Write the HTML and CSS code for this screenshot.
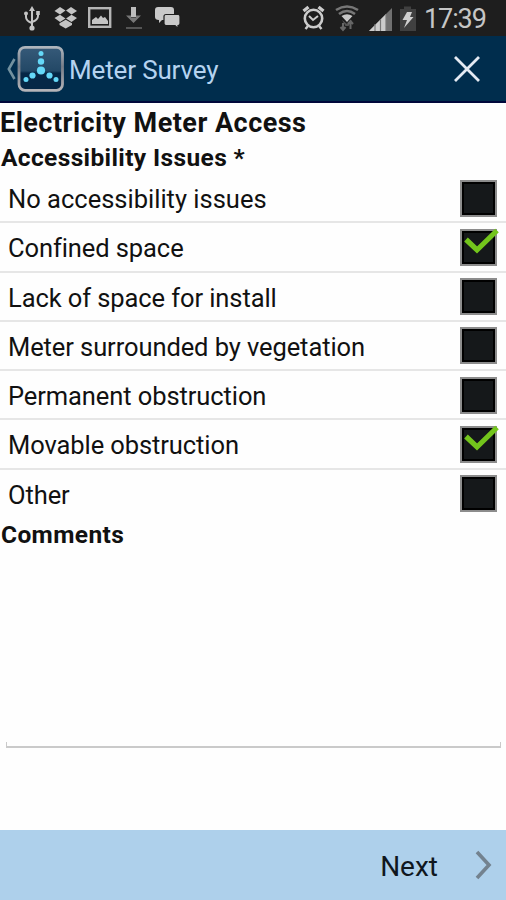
FILE: index.html
```html
<!DOCTYPE html>
<html lang="en">
<head>
<meta charset="utf-8">
<title>Meter Survey</title>
<link rel="stylesheet" href="styles.css">
</head>
<body>
<div class="status">
  <svg class="left-icons" width="190" height="36" viewBox="0 0 190 36">
    <g stroke="#c4c4c4" stroke-width="2" fill="none"><path d="M32 9V27M26 14V17Q26 21 32 23M38 13V16Q38 20 32 22"/></g>
    <g fill="#c4c4c4"><path d="M32 6L35 11H29Z"/><circle cx="32" cy="28" r="2.600"/><circle cx="26" cy="13.500" r="2"/><path d="M36.200 11h3.600v4h-3.600z"/>
    <path d="M60 7L65.500 10.500L60 14.500L54.500 11ZM71 7L77 11L71.500 14.500L66 10.500ZM54.500 18L60 14.800L65.500 18.500L60 22ZM77 18L71.500 14.800L66 18.500L71.500 22ZM59.500 23.300L65.700 19.700L72 23.300V25L65.700 28.600L59.500 25Z"/>
    <path d="M92 24V20L96 17L98 19L101 15.500L103 18L105 17L108 21V24Z"/></g>
    <rect x="89.200" y="8.200" width="21" height="18.600" fill="none" stroke="#b5b5b5" stroke-width="2.400"/>
    <path d="M131 7h5v10h-5z" fill="#bdbdbd"/><path d="M126 15.500h5v2h5v-2h5l-7.500 7.500z" fill="#777"/><path d="M126 27h16v2h-16z" fill="#555"/>
    <path d="M158 7h13q3 0 3 3v8q0 2-3 2h-9l-3 3v-3q-4 0-4-3v-7q0-3 3-3z" fill="#c9c9c9"/>
    <path d="M166 14.500h12q2 0 2 2v7q0 2-2 2v3l-3-3h-9q-2 0-2-2v-7q0-2 2-2z" fill="#c9c9c9" stroke="#1e1e1e" stroke-width="1.200"/>
  </svg>
  <svg class="right-icons" width="120" height="36" viewBox="300 0 120 36">
    <g fill="none" stroke="#ccc"><circle cx="313.500" cy="18.500" r="8.700" stroke-width="2.600"/><path d="M309 16L313 20L318 16" stroke-width="2"/><path d="M303.500 11L308.500 7M323.500 11L318.500 7" stroke-width="3.300"/><path d="M308 26L305.500 29M319 26L321.500 29" stroke-width="2.500"/></g>
    <g fill="none" stroke="#777" stroke-width="2.600"><path d="M336 10Q347 3 358 10M339 14Q347 8 355 14"/></g>
    <path d="M341.500 16Q347 12.500 352.500 16L347 22Z" fill="#c8c8c8"/><path d="M342 20l5 4 5-4-3.500 6h-3z" fill="#555"/>
    <path d="M343 29V23M340.500 27l2.500 3 2.500-3M350.500 29V22M348 24l2.500-3 2.500 3" stroke="#666" stroke-width="2" fill="none"/>
    <path d="M369 31L392 8V31Z" fill="#707070"/><path d="M369 31L386 14V31Z" fill="#ccc"/><path d="M375 24V31M380.500 19V31M386 14V31" stroke="#777" stroke-width="1.200"/>
    <path d="M400 9h4V6.500h7V9h5V31H400Z" fill="#404040"/><path d="M407 12h5l-2 5h3.500L404 28l3-8h-4.500Z" fill="#d0d0d0"/>
  </svg>
  <span class="clock">17:39</span>
</div>
<header class="bar">
  <svg class="logo" width="64" height="65" viewBox="0 37 64 65">
    <defs><linearGradient id="rim" x1="0" y1="0" x2="0" y2="1"><stop offset="0" stop-color="#aeb5bd"/><stop offset=".45" stop-color="#767d88"/><stop offset="1" stop-color="#b5b4b8"/></linearGradient>
    <linearGradient id="face" x1="0" y1="0" x2="0" y2="1"><stop offset="0" stop-color="#365a79"/><stop offset=".55" stop-color="#234866"/><stop offset=".6" stop-color="#062746"/><stop offset="1" stop-color="#062746"/></linearGradient></defs>
    <path d="M14.500 60L8.800 70L14.500 80" fill="none" stroke="#72919f" stroke-width="2.600"/>
    <rect x="19" y="48.300" width="43.500" height="43" rx="6" fill="url(#face)" stroke="url(#rim)" stroke-width="2.800"/>
    <g fill="#65d8f8"><circle cx="41" cy="54.500" r="2.500"/><circle cx="41" cy="62.500" r="3.200"/><circle cx="41" cy="71.500" r="4.100"/><circle cx="32.500" cy="76.500" r="3.100"/><circle cx="26" cy="80.500" r="2.500"/><circle cx="49.500" cy="76.500" r="3.100"/><circle cx="56" cy="80.500" r="2.500"/></g>
  </svg>
  <h1 class="title">Meter Survey</h1>
  <svg class="close" width="30" height="30" viewBox="0 0 30 30"><path d="M3 3L27 27M27 3L3 27" stroke="#e4eaf3" stroke-width="2.800"/></svg>
</header>
<main class="content">
  <h2 class="section">Electricity Meter Access</h2>
  <h3 class="label">Accessibility Issues *</h3>
  <ul class="options">
    <li class="option"><span class="wide">No accessibility issues</span><i class="box"></i></li>
    <li class="option"><span>Confined space</span><i class="box"><svg class="tick" width="40" height="30" viewBox="0 0 40 30"><path d="M4 12.500L15 23L35 3.500" fill="none" stroke="#73c51c" stroke-width="5.200"/></svg></i></li>
    <li class="option"><span>Lack of space for install</span><i class="box"></i></li>
    <li class="option"><span>Meter surrounded by vegetation</span><i class="box"></i></li>
    <li class="option"><span>Permanent obstruction</span><i class="box"></i></li>
    <li class="option"><span>Movable obstruction</span><i class="box"><svg class="tick" width="40" height="30" viewBox="0 0 40 30"><path d="M4 12.500L15 23L35 3.500" fill="none" stroke="#73c51c" stroke-width="5.200"/></svg></i></li>
    <li class="option"><span>Other</span><i class="box"></i></li>
  </ul>
  <h3 class="label">Comments</h3>
  <div class="field"></div>
</main>
<footer class="footer">
  <span class="next">Next</span>
  <svg class="chevron" width="20" height="32" viewBox="0 0 20 32"><path d="M3 3L15 16L3 29" fill="none" stroke="#73828f" stroke-width="3.600"/></svg>
</footer>
</body>
</html>
```
FILE: styles.css
```css
* { box-sizing: border-box; }
body { margin: 0; width: 506px; height: 900px; display: flex; flex-direction: column; background: #fefefe; color: #111; font-family: Roboto, "Liberation Sans", sans-serif; overflow: hidden; }
svg { display: block; flex: none; }
h1, h2, h3, ul { margin: 0; padding: 0; }
.status { height: 36px; flex: none; display: flex; background: #1e1e1e; }
.right-icons { margin-left: 110px; }
.clock { margin-left: 4px; font-size: 27px; line-height: 38px; color: #c6c6c6; letter-spacing: -1.100px; white-space: nowrap; }
.bar { height: 67px; flex: none; display: flex; align-items: center; background: #002d4d; border-bottom: 2px solid #00083b; }
.title { margin-left: 5px; padding-top: 3px; font-size: 26px; font-weight: 400; line-height: 62px; letter-spacing: -.150px; color: #b5d3f0; white-space: nowrap; }
.close { margin: 1px 24px 0 auto; }
.content { flex: 1; }
.section { height: 39px; font-size: 27px; line-height: 41px; font-weight: 700; letter-spacing: .480px; white-space: nowrap; }
.label { height: 32px; padding-left: 1px; font-size: 24.500px; line-height: 32px; font-weight: 700; letter-spacing: .370px; white-space: nowrap; }
.options { list-style: none; }
.option { height: 49.250px; display: flex; align-items: center; justify-content: space-between; padding: 1px 9px 0 8px; border-bottom: 2px solid #e6e6e6; font-size: 25.500px; line-height: 32px; letter-spacing: -.090px; white-space: nowrap; }
.option span { padding-top: 2px; }
.option .wide { letter-spacing: 0; }
.option:last-child { border-bottom-color: transparent; }
.box { position: relative; width: 37px; height: 37px; background: #15181a; border: 2px solid #8c8c8c; box-shadow: inset 0 0 0 2px #000; }
.tick { position: absolute; left: 0; top: -4px; }
.field { margin: 191px 5px 0 6px; height: 6px; border: solid #cacaca; border-width: 0 1.500px 2px; }
.footer { height: 70px; flex: none; display: flex; align-items: center; justify-content: flex-end; background: #aed0eb; color: #10171e; }
.next { font-size: 28px; line-height: 70px; margin-right: 36px; padding-top: 3px; }
.chevron { margin-right: 12px; }
```
